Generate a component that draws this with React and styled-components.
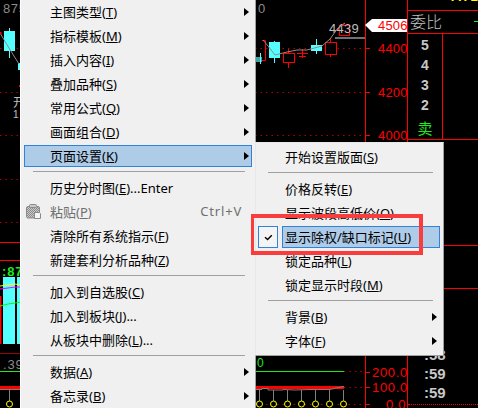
import styled, { createGlobalStyle } from "styled-components";

const Global = createGlobalStyle`
  html, body { margin: 0; padding: 0; background: #000; }
  * { box-sizing: border-box; }
`;

const Screen = styled.div`
  position: relative;
  display: grid;
  grid-template-columns: 407px 71px;
  width: 478px;
  height: 408px;
  overflow: hidden;
  background: #000;
  font-family: "Liberation Sans", "Noto Sans CJK SC", sans-serif;
`;

const ChartCanvas = styled.svg`
  display: block;
  width: 407px;
  height: 408px;
`;

/* right hand quote panel */
const QuotePanel = styled.div`
  display: flex;
  flex-direction: column;
  height: 408px;
  border-left: 1px solid #f00;
  overflow: hidden;
`;

const PriceStrip = styled.div`
  display: flex;
  flex: none;
  align-items: flex-end;
  justify-content: flex-end;
  height: 11px;
  border-bottom: 1px solid #f00;
  overflow: hidden;
`;

const PriceFragment = styled.span`
  margin-right: -1px;
  margin-bottom: 7px;
  color: #ff0;
  font-size: 13px;
  font-weight: bold;
  letter-spacing: 1px;
  line-height: 13px;
`;

const RatioRow = styled.div`
  display: flex;
  flex: none;
  align-items: center;
  justify-content: space-between;
  height: 23px;
  padding: 0 0 2px 2px;
  border-bottom: 1px solid #f00;
  color: #c4c4c4;
  font-family: "Noto Sans CJK SC", sans-serif;
  font-size: 16px;
  font-weight: 300;
`;

const RatioDash = styled.i`
  width: 4px;
  height: 1px;
  background: #0f0;
`;

const Book = styled.div`
  display: grid;
  flex: none;
  grid-template-columns: 35px 1fr;
  height: 106px;
  border-bottom: 1px solid #f00;
`;

const Levels = styled.div`
  display: flex;
  flex-direction: column;
  align-items: center;
  padding-top: 1px;
  border-right: 1px solid #f00;
`;

const Level = styled.div`
  height: 20px;
  color: #c8c8c8;
  font-size: 14px;
  font-weight: bold;
  line-height: 20px;
`;

const SellMark = styled.div`
  margin-top: 2px;
  color: #1fe81f;
  font-family: "Noto Sans CJK SC", sans-serif;
  font-size: 15px;
  line-height: 22px;
`;

const DepthRule = styled.div`
  flex: none;
  height: ${(p) => p.$height}px;
  border-bottom: 1px solid #f00;
`;

const Times = styled.div`
  flex: none;
  padding: 56px 0 2px 16px;
`;

const TimeRow = styled.div`
  color: #c8c8c8;
  font-size: 15px;
  font-weight: bold;
  line-height: 19px;
`;

const DottedRule = styled.div`
  flex: none;
  height: 1px;
  border-top: 1px dotted #f00;
`;

/* context menus */
const Menu = styled.div`
  position: absolute;
  left: ${(p) => p.$left}px;
  top: ${(p) => p.$top}px;
  display: flex;
  flex-direction: column;
  width: ${(p) => p.$width}px;
  padding: ${(p) => p.$padding};
  background: #f0f0f0;
  border: 1px solid #a0a0a0;
  border-left-color: ${(p) => p.$edge};
  border-top-color: ${(p) => p.$edge};
  color: #000;
  font-family: "Noto Sans", "Noto Sans CJK SC", sans-serif;
  font-size: 13px;
`;

const Row = styled.div`
  display: flex;
  flex: none;
  align-items: center;
  height: 22px;
  margin: 1px 3px;
  padding-left: ${(p) => p.$pad}px;
  white-space: nowrap;
  color: ${(p) => (p.$disabled ? "#6f6f6f" : "#000")};
  background: ${(p) => (p.$active ? "#aecbe8" : "transparent")};
  border: 1px solid ${(p) => (p.$active ? "#3083d8" : "transparent")};
`;

const Label = styled.span`
  margin-bottom: 2px;
`;

const CheckRow = styled.div`
  display: flex;
  flex: none;
  gap: 4px;
  margin: 1px 3px 1px 2px;
`;

const CheckCell = styled.div`
  display: flex;
  flex: none;
  align-items: center;
  justify-content: center;
  width: 20px;
  height: 22px;
  border: 1px solid #3083d8;
  background: #f4f4f4;
`;

const CheckLabel = styled(Row)`
  flex: 1;
  margin: 0;
`;

const Gutter = styled.span`
  display: flex;
  flex: none;
  width: 24px;
  align-items: center;
`;

const Shortcut = styled.span`
  margin-left: auto;
  margin-right: 9px;
  margin-bottom: 2px;
  letter-spacing: 0.8px;
`;

const Arrow = styled.i`
  margin-left: auto;
  margin-right: 2px;
  width: 0;
  height: 0;
  border-top: 4.5px solid transparent;
  border-bottom: 4.5px solid transparent;
  border-left: 5px solid #000;
`;

const Rule = styled.div`
  flex: none;
  height: 1px;
  margin: 3px ${(p) => p.$right}px 4px ${(p) => p.$left}px;
  background: #a0a0a0;
`;

const Callout = styled.div`
  position: absolute;
  left: 251px;
  top: 214px;
  width: 172px;
  height: 41px;
  border: 4px solid #f93c3c;
  border-left-width: 3px;
`;

const candles = [
  { x: 269, y: 42, w: 11, h: 16, t: 41, b: 63, up: false },
  { x: 283, y: 53, w: 11, h: 9, t: 49, b: 68, up: true },
  { x: 311, y: 45, w: 11, h: 6, t: 39, b: 54, up: false },
  { x: 325, y: 42, w: 11, h: 12, t: 38, b: 57, up: true },
  { x: 339, y: 25, w: 10, h: 10, t: 23, b: 35, up: true },
];

const lollipops = [260, 274, 288, 302, 316, 330, 344];

const dotted = [
  [0, 48, 20],
  [255, 48, 365],
  [0, 92, 20],
  [255, 92, 365],
  [0, 135, 20],
  [255, 135, 365],
  [0, 179, 20],
  [0, 222, 20],
  [344, 371, 365],
  [344, 387, 365],
  [255, 404, 365],
];

const Chart = () => (
  <ChartCanvas viewBox="0 0 407 408">
    {dotted.map(([a, y, b]) => (
      <line key={`${a}-${y}`} x1={a} x2={b} y1={y + 0.5} y2={y + 0.5} stroke="#b40000" strokeDasharray="1.5 4" />
    ))}

    {/* upper left stub behind the menu */}
    <text x="3" y="13" fill="#8a8a8a" fontSize="13" letterSpacing="0.6">875</text>
    <line x1="9.5" x2="9.5" y1="28" y2="58" stroke="#5ff" />
    <rect x="4" y="31" width="11" height="20" fill="#5ff" />
    <rect x="18" y="63" width="3" height="7" fill="#5ff" />
    <polyline points="0,33 9,48 19,64" fill="none" stroke="#8a8a8a" />
    <rect x="0" y="32" width="1.5" height="2" fill="#f00" />
    <rect x="19" y="85" width="2" height="2" fill="#f00" />
    <text x="13" y="107" fill="#c0c0c0" fontSize="12" fontFamily="Noto Sans CJK SC">开</text>
    <text x="13" y="118" fill="#c0c0c0" fontSize="10">1</text>

    {/* candles */}
    <text x="258" y="13" fill="#8a8a8a" fontSize="13">0</text>
    <rect x="255" y="57" width="7" height="5" fill="#3fa3a3" />
    <line x1="260.5" x2="260.5" y1="53" y2="64" stroke="#5ff" />
    <polyline points="262,40.5 265.5,40.5 265.5,60.5 262,60.5" fill="none" stroke="#f00" />
    {candles.map((c) => (
      <g key={c.x}>
        <line x1={c.x + c.w / 2} x2={c.x + c.w / 2} y1={c.t} y2={c.b} stroke={c.up ? "#f00" : "#5ff"} />
        <rect
          x={c.up ? c.x + 0.5 : c.x}
          y={c.up ? c.y + 0.5 : c.y}
          width={c.w}
          height={c.h}
          fill={c.up ? "#000" : "#5ff"}
          stroke={c.up ? "#f00" : "none"}
        />
      </g>
    ))}
    <path d="M297 53.5H308M302.5 49V58" stroke="#f00" fill="none" />
    <line x1="299" x2="306" y1="56.5" y2="56.5" stroke="#f00" />
    <text x="329" y="33" fill="#bcbcbc" fontSize="13" letterSpacing="0.3">4439</text>
    <polyline
      points="263,40 268,46 275,55 287,52 297,50 307,50 322,46 330,39 338,28 345,23"
      fill="none"
      stroke="#8c8c8c"
    />
    <rect x="335" y="37" width="30" height="2" fill="#707070" />

    {/* price axis */}
    <line x1="365.5" x2="365.5" y1="0" y2="408" stroke="#f00" />
    {[48, 92, 135, 372, 387, 404].map((y) => (
      <line key={y} x1="365" x2="370" y1={y + 0.5} y2={y + 0.5} stroke="#f00" />
    ))}
    <polygon points="365,25 372,19 407,19 407,32 372,32" fill="#fff" />
    <g fill="#f00" fontSize="13" letterSpacing="0.2">
      <text x="378" y="30">4506</text>
      <text x="378" y="53">4400</text>
      <text x="378" y="97">4200</text>
      <text x="378" y="140">4000</text>
      <text x="372" y="377" letterSpacing="0.7">200.0</text>
      <text x="372" y="392" letterSpacing="0.7">100.0</text>
      <text x="386" y="409" letterSpacing="0.7">0.0</text>
    </g>

    {/* lower left stub behind the menu */}
    <line x1="0" x2="21" y1="242.5" y2="242.5" stroke="#f00" />
    <line x1="0" x2="21" y1="260.5" y2="260.5" stroke="#f00" />
    <text x="2" y="276" fill="#1fe81f" fontSize="13" fontWeight="bold" letterSpacing="0.8">:87</text>
    <rect x="3" y="277" width="12" height="67" fill="#5ff" />
    <rect x="17" y="277" width="4" height="67" fill="#5ff" />
    <rect x="0" y="296" width="1.5" height="48" fill="#f00" />
    <polyline points="0,286 8,285 15,284 21,285" fill="none" stroke="#ff0" />
    <polyline points="0,289 8,288 15,287 21,287" fill="none" stroke="#f0f" />
    <polyline points="0,306 8,304 15,303 21,302" fill="none" stroke="#0f0" />
    <line x1="0" x2="21" y1="353.5" y2="353.5" stroke="#a00000" />
    <text x="3" y="369" fill="#8a8a8a" fontSize="13" letterSpacing="0.8">.39</text>
    <line x1="0" x2="21" y1="371.5" y2="371.5" stroke="#1fe81f" />
    <rect x="0" y="386" width="21" height="3" fill="#f00" />
    <line x1="0" x2="21" y1="389.5" y2="389.5" stroke="#808080" />
    <line x1="9.5" x2="9.5" y1="390" y2="401" stroke="#808080" />
    <circle cx="9.5" cy="404" r="3" fill="none" stroke="#ff0" />

    {/* volume pane */}
    <text x="257" y="367" fill="#1fe81f" fontSize="12">0</text>
    <line x1="255" x2="344" y1="371.5" y2="371.5" stroke="#1fe81f" />
    <rect x="255" y="386" width="89" height="3" fill="#f00" />
    <polyline points="255,389.5 262,389.5 262,388.5 268,388.5 268,390 283,390 283,389.5 295,390 309,389.5 330,389.5 336,388 344,386.5" fill="none" stroke="#808080" />
    {lollipops.map((x) => (
      <g key={x}>
        <line x1={x - 0.5} x2={x - 0.5} y1="390" y2="401" stroke="#808080" />
        <circle cx={x - 0.5} cy="404" r="3" fill="#000" stroke="#ff0" />
      </g>
    ))}
  </ChartCanvas>
);

const PasteIcon = () => (
  <svg width="16" height="15" viewBox="0 0 16 15" style={{ marginTop: -2, marginLeft: 0 }}>
    <defs>
      <pattern id="dither" width="2" height="2" patternUnits="userSpaceOnUse">
        <rect width="2" height="2" fill="#c8c8c8" />
        <rect width="1" height="1" fill="#8c8c8c" />
        <rect x="1" y="1" width="1" height="1" fill="#8c8c8c" />
      </pattern>
    </defs>
    <rect x="0.5" y="2.5" width="13" height="11.5" rx="1.5" fill="url(#dither)" stroke="#8a8a8a" />
    <rect x="3.5" y="0.5" width="7" height="3" rx="1" fill="#c8c8c8" stroke="#8a8a8a" />
    <path d="M8.5 8.5H13.5L14.5 9.5V14.5H8.5Z" fill="#f4f4f4" stroke="#8a8a8a" />
  </svg>
);

const Item = ({ label, mark, tail, sub, disabled, active, icon, pad = 1 }) => (
  <Row $active={active} $disabled={disabled} $pad={pad}>
    {pad === 1 && <Gutter>{icon}</Gutter>}
    <Label>
      {label}
      {mark && (
        <>
          (<u>{mark}</u>)
        </>
      )}
      {tail}
    </Label>
    {sub && <Arrow />}
  </Row>
);

const MainMenu = () => (
  <Menu $left={20} $top={-1} $width={236} $padding="0" $edge="#fff">
    <Item label="主图类型" mark="T" sub />
    <Item label="指标模板" mark="M" sub />
    <Item label="插入内容" mark="I" sub />
    <Item label="叠加品种" mark="S" sub />
    <Item label="常用公式" mark="Q" sub />
    <Item label="画面组合" mark="D" sub />
    <Item label="页面设置" mark="K" sub active />
    <Rule $left={12} $right={10} />
    <Item label="历史分时图" mark="E" tail="...Enter" />
    <Row $disabled $pad={1}>
      <Gutter>
        <PasteIcon />
      </Gutter>
      <Label>
        粘贴(<u>P</u>)
      </Label>
      <Shortcut>Ctrl+V</Shortcut>
    </Row>
    <Item label="清除所有系统指示" mark="F" />
    <Item label="新建套利分析品种" mark="Z" />
    <Rule $left={12} $right={10} />
    <Item label="加入到自选股" mark="C" />
    <Item label="加入到板块" mark="J" tail="..." />
    <Item label="从板块中删除" mark="L" tail="..." />
    <Rule $left={12} $right={10} />
    <Item label="数据" mark="A" sub />
    <Item label="备忘录" mark="B" sub />
  </Menu>
);

const PageMenu = () => (
  <Menu $left={255} $top={142} $width={189} $padding="2px 0" $edge="#e8e8e8">
    <Item label="开始设置版面" mark="S" pad={25} />
    <Rule $left={12} $right={10} />
    <Item label="价格反转" mark="E" pad={25} />
    <Item label="显示波段高低价" mark="O" pad={25} />
    <CheckRow>
      <CheckCell>
        <svg width="9" height="7" viewBox="0 0 9 7">
          <path d="M1 3.2L3.6 5.6L7.8 1.2" fill="none" stroke="#000" strokeWidth="1.4" />
        </svg>
      </CheckCell>
      <CheckLabel $active $pad={2}>
        <Label>
          显示除权/缺口标记(<u>U</u>)
        </Label>
      </CheckLabel>
    </CheckRow>
    <Item label="锁定品种" mark="L" pad={25} />
    <Item label="锁定显示时段" mark="M" pad={25} />
    <Rule $left={12} $right={10} />
    <Item label="背景" mark="B" sub pad={25} />
    <Item label="字体" mark="F" sub pad={25} />
  </Menu>
);

const App = () => (
  <Screen>
    <Global />
    <Chart />
    <QuotePanel>
      <PriceStrip>
        <PriceFragment>7.72</PriceFragment>
      </PriceStrip>
      <RatioRow>
        委比
        <RatioDash />
      </RatioRow>
      <Book>
        <Levels>
          <Level>5</Level>
          <Level>4</Level>
          <Level>3</Level>
          <Level>2</Level>
          <SellMark>卖</SellMark>
        </Levels>
      </Book>
      <DepthRule $height={106} />
      <DepthRule $height={43} />
      <Times>
        <TimeRow>:58</TimeRow>
        <TimeRow>:59</TimeRow>
        <TimeRow>:59</TimeRow>
      </Times>
      <DottedRule />
    </QuotePanel>
    <MainMenu />
    <PageMenu />
    <Callout />
  </Screen>
);

export default App;
